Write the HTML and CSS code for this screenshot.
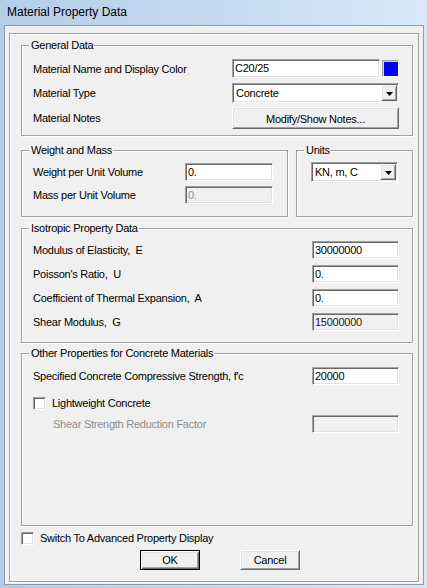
FILE: index.html
```html
<!DOCTYPE html>
<html>
<head>
<meta charset="utf-8">
<title>Material Property Data</title>
<link rel="stylesheet" href="styles.css">
</head>
<body>
<div class="window">
  <div class="titlebar">Material Property Data</div>
  <div class="client">
    <div class="panel">
      <fieldset class="group">
        <legend>General Data</legend>
        <div class="gbody general">
          <div class="row r1">
            <span class="lbl">Material Name and Display Color</span>
            <div class="ctl namectl">
              <div class="field name">C20/25</div>
              <div class="swatch"></div>
            </div>
          </div>
          <div class="row r2">
            <span class="lbl">Material Type</span>
            <div class="ctl combo">
              <span class="ctext">Concrete</span>
              <span class="drop"><svg width="7" height="4" viewBox="0 0 7 4"><path d="M0 0H7L3.5 4Z" fill="#000"/></svg></span>
            </div>
          </div>
          <div class="row r3">
            <span class="lbl">Material Notes</span>
            <div class="ctl btn notes">Modify/Show Notes...</div>
          </div>
        </div>
      </fieldset>

      <div class="pair">
        <fieldset class="group weight">
          <legend>Weight and Mass</legend>
          <div class="gbody wbody">
            <div class="row">
              <span class="lbl">Weight per Unit Volume</span>
              <div class="field wfield">0.</div>
            </div>
            <div class="row">
              <span class="lbl">Mass per Unit Volume</span>
              <div class="field wfield disabled">0.</div>
            </div>
          </div>
        </fieldset>
        <fieldset class="group units">
          <legend>Units</legend>
          <div class="gbody ubody">
            <div class="combo ucombo">
              <span class="ctext">KN, m, C</span>
              <span class="drop"><svg width="7" height="4" viewBox="0 0 7 4"><path d="M0 0H7L3.5 4Z" fill="#000"/></svg></span>
            </div>
          </div>
        </fieldset>
      </div>

      <fieldset class="group iso">
        <legend>Isotropic Property Data</legend>
        <div class="gbody ibody">
          <div class="row">
            <span class="lbl">Modulus of Elasticity,&nbsp; E</span>
            <div class="field nfield">30000000</div>
          </div>
          <div class="row">
            <span class="lbl">Poisson's Ratio,&nbsp; U</span>
            <div class="field nfield">0.</div>
          </div>
          <div class="row">
            <span class="lbl">Coefficient of Thermal Expansion,&nbsp; A</span>
            <div class="field nfield">0.</div>
          </div>
          <div class="row">
            <span class="lbl">Shear Modulus,&nbsp; G</span>
            <div class="field nfield readonly">15000000</div>
          </div>
        </div>
      </fieldset>

      <fieldset class="group other">
        <legend>Other Properties for Concrete Materials</legend>
        <div class="gbody obody">
          <div class="row">
            <span class="lbl">Specified Concrete Compressive Strength, f'c</span>
            <div class="field nfield">20000</div>
          </div>
          <div class="checkrow lightweight">
            <span class="check"></span>
            <span class="clbl">Lightweight Concrete</span>
          </div>
          <div class="row shear">
            <span class="lbl dim">Shear Strength Reduction Factor</span>
            <div class="field nfield disabled"></div>
          </div>
        </div>
      </fieldset>

      <div class="checkrow switch">
        <span class="check"></span>
        <span class="clbl">Switch To Advanced Property Display</span>
      </div>

      <div class="buttons">
        <div class="btn default">OK</div>
        <div class="btn">Cancel</div>
      </div>
    </div>
  </div>
</div>
</body>
</html>
```

FILE: styles.css
```css
* { box-sizing: border-box; }

html, body {
  margin: 0;
  padding: 0;
}

body {
  width: 427px;
  height: 588px;
  overflow: hidden;
  font-family: "Liberation Sans", Arial, sans-serif;
  font-size: 11px;
  letter-spacing: -0.25px;
  color: #000;
  background: #c4d9ef;
}

.window {
  width: 427px;
  height: 588px;
  display: flex;
  flex-direction: column;
  background: linear-gradient(to right, #b4cde9 0%, #c3d9f0 45%, #d9e9f8 100%);
}

.titlebar {
  height: 25px;
  line-height: 25px;
  padding-left: 7px;
  font-size: 12px;
  letter-spacing: 0;
  color: #000;
}

.client {
  margin-left: 4px;
  width: 420px;
  height: 560px;
  background: #f0f0f0;
  border: 1px solid #8f9cab;
  padding: 7px 0 0 4px;
}

.panel {
  width: 410px;
  height: 549px;
  border: 1px solid #a0a0a0;
  box-shadow: inset 1px 1px 0 #fff, 1px 1px 0 #fff;
  padding: 5px 5px 0 11px;
  display: flex;
  flex-direction: column;
}

.group {
  margin: 0;
  padding: 0;
  min-width: 0;
  border: 1px solid #a0a0a0;
  box-shadow: 1px 1px 0 #fff, inset 1px 1px 0 #fff;
}

.group legend {
  margin-left: 7px;
  padding: 0 1px 0 2px;
  line-height: 13px;
  height: 13px;
  background: #f0f0f0;
}

.gbody {
  display: flex;
  flex-direction: column;
}

.row {
  display: flex;
  align-items: center;
  height: 18px;
}

.lbl {
  flex: 1;
  white-space: nowrap;
}

.lbl.dim {
  padding-left: 20px;
  color: #8d8d8d;
}

/* General data */
.general {
  padding: 7px 13px 6px 11px;
}
.general .r1 { height: 19px; margin-bottom: 5px; }
.general .r2 { height: 20px; margin-bottom: 4px; }
.general .r3 { height: 22px; }

.ctl {
  width: 167px;
  height: 100%;
}

.namectl {
  display: flex;
  align-items: center;
  gap: 2px;
}

.field {
  height: 18px;
  line-height: 14px;
  padding: 1px 2px;
  background: #fff;
  border: 1px solid;
  border-color: #a0a0a0 #fff #fff #a0a0a0;
  box-shadow: inset 1px 1px 0 #696969, inset -1px -1px 0 #e3e3e3;
  white-space: nowrap;
  overflow: hidden;
}

.field.name {
  width: 148px;
  height: 19px;
  line-height: 15px;
}

.field.disabled {
  background: #f0f0f0;
  color: #8d8d8d;
}

.field.readonly {
  background: #f0f0f0;
  color: #222;
}

.swatch {
  width: 17px;
  height: 17px;
  background: #0000ff;
  border: 1px solid;
  border-color: #a0a0a0 #fff #fff #a0a0a0;
  box-shadow: inset 1px 1px 0 #d4d4d4;
}

.combo {
  display: flex;
  align-items: stretch;
  padding: 1px;
  background: #fff;
  border: 1px solid;
  border-color: #a0a0a0 #fff #fff #a0a0a0;
  box-shadow: inset 1px 1px 0 #696969, inset -1px -1px 0 #e3e3e3;
}

.ctext {
  flex: 1;
  padding-left: 2px;
  line-height: 16px;
  white-space: nowrap;
}

.drop {
  width: 16px;
  display: flex;
  align-items: center;
  justify-content: center;
  background: #f0f0f0;
  border: 1px solid;
  border-color: #fff #696969 #696969 #fff;
  box-shadow: inset 1px 1px 0 #e3e3e3, inset -1px -1px 0 #a0a0a0;
}

.drop svg { display: block; margin-top: 1px; }

.btn {
  display: flex;
  align-items: center;
  justify-content: center;
  background: #f0f0f0;
  border: 1px solid;
  border-color: #fff #696969 #696969 #fff;
  box-shadow: inset 1px 1px 0 #e3e3e3, inset -1px -1px 0 #a0a0a0;
  white-space: nowrap;
}

.btn.notes { padding-top: 1px; }

/* Weight & units */
.pair {
  display: flex;
  gap: 8px;
  margin-top: 8px;
  align-items: stretch;
}

.weight { width: 267px; }
.units { width: 117px; }

.wbody {
  padding: 6px 14px 12px 11px;
  gap: 5px;
}

.wfield { width: 88px; }

.ubody {
  padding: 5px 0 0 14px;
}

.ucombo {
  width: 87px;
  height: 20px;
}

/* Isotropic */
.iso { margin-top: 5px; }

.ibody {
  padding: 6px 13px 11px 11px;
  gap: 6px;
}

.nfield { width: 87px; }

/* Other */
.other { margin-top: 4px; }

.obody {
  padding: 7px 13px 92px 11px;
}

.checkrow {
  display: flex;
  align-items: center;
  height: 13px;
}

.check {
  width: 13px;
  height: 13px;
  background: #fff;
  border: 1px solid;
  border-color: #a0a0a0 #fff #fff #a0a0a0;
  box-shadow: inset 1px 1px 0 #696969, inset -1px -1px 0 #e3e3e3;
  margin-right: 6px;
  flex: none;
}

.clbl { white-space: nowrap; line-height: 13px; }

.lightweight { margin-top: 12px; }
.shear { margin-top: 5px; }

.switch { margin-top: 6px; }

/* Buttons */
.buttons {
  display: flex;
  gap: 40px;
  margin-top: 5px;
  margin-left: 119px;
}

.buttons .btn {
  width: 60px;
  height: 20px;
}

.btn.default {
  border: 1px solid #000;
  box-shadow: inset 1px 1px 0 #fff, inset -1px -1px 0 #696969, inset 2px 2px 0 #e3e3e3, inset -2px -2px 0 #a0a0a0;
}
```
